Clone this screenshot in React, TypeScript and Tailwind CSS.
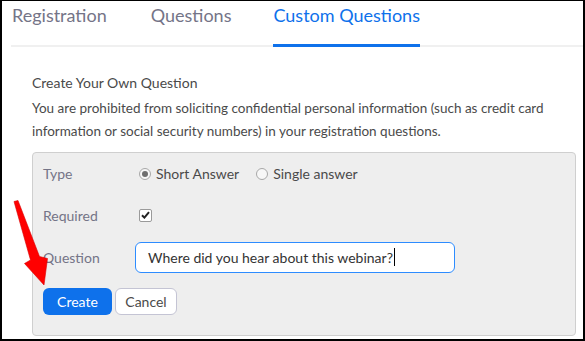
import React from "react";

const font = { fontFamily: "Lato, 'Open Sans', sans-serif" };

function Tabs() {
  return (
    <div className="ml-[9px] pl-px h-[46px] flex border-b-2 border-[#f0f0f0] text-[18px] leading-[24px]">
      <div className="pt-[2px] text-[#747487]">Registration</div>
      <div className="ml-[44px] pt-[2px] text-[#747487]">Questions</div>
      <div className="ml-[42px] pt-[2px] h-[46px] border-b-[3px] border-[#0e71eb] text-[#0e71eb]">Custom Questions</div>
    </div>
  );
}

function Radio({ checked, label }: { checked?: boolean; label: string }) {
  return (
    <div className="flex items-center gap-[5px]">
      <span className="w-[12px] h-[12px] rounded-full border border-[#a8a8a8] bg-[#f7f7f7] flex items-center justify-center">
        {checked && <span className="w-[6px] h-[6px] rounded-full bg-[#6e6e6e]" />}
      </span>
      <span className="text-[#4a4a4a]">{label}</span>
    </div>
  );
}

function Row({ label, first, children }: { label: string; first?: boolean; children: React.ReactNode }) {
  return (
    <div className={first ? "h-[41px] flex items-center" : "h-[42px] flex items-center"}>
      <div className="w-[92px] text-[#747487]">{label}</div>
      {children}
    </div>
  );
}

function QuestionForm() {
  return (
    <div className="mt-[9px] border border-[#cfcfcf] rounded-[4px] bg-[#eeeeee] pl-[10px] pb-[20px] text-[14px]">
      <Row label="Type" first>
        <div className="flex items-center gap-[17px] pl-[4px]">
          <Radio checked label="Short Answer" />
          <Radio label="Single answer" />
        </div>
      </Row>
      <Row label="Required">
        <span className="ml-[4px] w-[13px] h-[13px] rounded-[2px] border border-[#9a9a9a] bg-white flex items-center justify-center">
          <svg width="9" height="8" viewBox="0 0 9 8">
            <path d="M1 4.2 L3.4 6.6 L8 1.2" fill="none" stroke="#222" strokeWidth="2" />
          </svg>
        </span>
      </Row>
      <Row label="Question">
        <div className="w-[320px] h-[31px] border-[1.5px] border-[#2d8cff] rounded-[6px] bg-white flex items-center pl-[12px] text-[14px] text-[#333]">
          Where did you hear about this webinar?
          <span className="ml-px w-px h-[18px] bg-black" />
        </div>
      </Row>
      <div className="mt-[10px] flex gap-[3px]">
        <button className="w-[69px] h-[27px] rounded-[6px] bg-[#0e71eb] text-white text-[14px]">Create</button>
        <button className="w-[62px] h-[27px] rounded-[6px] bg-white border border-[#c4c4d4] text-[#4a4a4a] text-[14px]">Cancel</button>
      </div>
    </div>
  );
}

function Arrow() {
  return (
    <svg className="absolute left-0 top-0 pointer-events-none" width="585" height="341">
      <polygon
        points="12,200.5 16,199.5 37.5,255.5 45.5,257.5 42,284 22.5,262.5 28.5,259"
        fill="#ff0000"
        stroke="#d80000"
        strokeWidth="0.6"
        strokeLinejoin="round"
      />
    </svg>
  );
}

export default function App() {
  return (
    <div
      className="relative w-[585px] h-[341px] overflow-hidden bg-white border-l-2 border-r-2 border-b-2 border-t border-black"
      style={font}
    >
      <Tabs />
      <div className="pl-[30px] pr-[7px]">
        <div className="mt-[26px] text-[14px] leading-[20px] text-[#4a4a4a]">Create Your Own Question</div>
        <p className="mt-[4px] text-[13.5px] leading-[23px] text-[#4a4a4a]">
          You are prohibited from soliciting confidential personal information (such as credit card information or
          social security numbers) in your registration questions.
        </p>
        <QuestionForm />
      </div>
      <Arrow />
    </div>
  );
}
